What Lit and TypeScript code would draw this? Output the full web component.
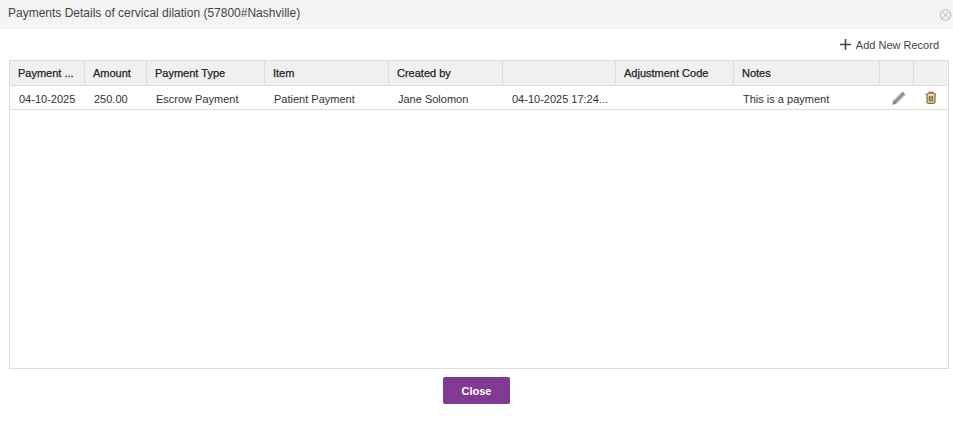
import { LitElement, html, css } from "lit";
import { customElement } from "lit/decorators.js";

const heads = ["Payment ...", "Amount", "Payment Type", "Item", "Created by", "", "Adjustment Code", "Notes", "", ""];
const cells = ["04-10-2025", "250.00", "Escrow Payment", "Patient Payment", "Jane Solomon", "04-10-2025 17:24...", "", "This is a payment"];

@customElement("app-root")
export class AppRoot extends LitElement {
  static styles = css`
    :host { display: block; width: 953px; height: 428px; background: #fff; overflow: hidden;
      font-family: "Liberation Sans", Arial, sans-serif; color: #333; }
    .title { height: 29px; background: #f4f4f4; display: flex; align-items: center; justify-content: space-between;
      padding: 0 1px 0 8px; box-sizing: border-box; font-size: 12px; color: #444; }
    .title span { position: relative; top: -2px; }
    .x { width: 13px; height: 13px; display: block; margin-top: 0; }
    .tools { height: 31px; display: flex; justify-content: flex-end; align-items: center; padding: 0 14px 0 0; font-size: 11px; color: #444; gap: 4px; box-sizing: border-box; }
    .tools svg { display: block; }
    .table { margin: 0 4px 0 9px; height: 309px; box-sizing: border-box; border: 1px solid #dcdcdc; }
    .row { display: grid; grid-template-columns: 75px 62px 118px 124px 114px 113px 118px 146px 34px 1fr; }
    .head { background: #f0f0f0; height: 25px; border-bottom: 1px solid #dcdcdc; box-sizing: border-box; }
    .body { height: 24px; border-bottom: 1px solid #dcdcdc; box-sizing: border-box; }
    .head div { border-right: 1px solid #dcdcdc; font-size: 11px; font-weight: 400; -webkit-text-stroke: 0.25px #222; color: #222; padding-left: 8px; line-height: 24px; white-space: nowrap; overflow: hidden; }
    .head div:last-child { border-right: 0; }
    .body div { font-size: 11px; color: #333; padding-left: 9px; line-height: 27px; white-space: nowrap; overflow: hidden; }
    .body .ic { padding: 0; display: flex; justify-content: center; align-items: flex-start; }
    .pencil { margin: 4px 0 0 3px; }
    .trash { margin: 5px 0 0 0; }
    .foot { display: flex; justify-content: center; padding-top: 8px; }
    button { width: 67px; height: 27px; background: #803a92; border: 0; border-radius: 2px; color: #fff; font: bold 11px "Liberation Sans", Arial, sans-serif; padding: 0; }
  `;

  render() {
    return html`
      <div class="title">
        <span>Payments Details of cervical dilation (57800#Nashville)</span>
        <svg class="x" viewBox="0 0 13 13" fill="none" stroke="#b5b5b5" stroke-width="1"><circle cx="6.5" cy="7" r="5.3"/><path d="M3 3.5l7 7M10 3.5l-7 7"/></svg>
      </div>
      <div class="tools">
        <svg width="13" height="13" viewBox="0 0 13 13"><path d="M6.5 1v11M1 6.5h11" stroke="#444" stroke-width="1.6" fill="none"/></svg>
        <span>Add New Record</span>
      </div>
      <div class="table">
        <div class="row head">${heads.map((h) => html`<div>${h}</div>`)}</div>
        <div class="row body">
          ${cells.map((c) => html`<div>${c}</div>`)}
          <div class="ic">
            <svg class="pencil" width="16" height="16" viewBox="0 0 16 16">
              <path d="M11.5 1.5l3 3L5 14l-3.8.8L2 11z" fill="#8c8c8c"/>
              <path d="M3 11.2l8.5-8.5M5 13l8.5-8.5" stroke="#c4c4c4" stroke-width=".8" fill="none"/>
            </svg>
          </div>
          <div class="ic">
            <svg class="trash" width="12" height="13" viewBox="0 0 12 13" fill="none" stroke="#6b4a12" stroke-width="1">
              <path d="M.8 3h10.4M4 3V1.2h4V3"/>
              <path d="M2 3v8.2c0 .7.4 1.1 1 1.1h6c.6 0 1-.4 1-1.1V3" fill="#f3e3b8"/>
              <path d="M4.3 4.8v5.8M6 4.8v5.8M7.7 4.8v5.8"/>
            </svg>
          </div>
        </div>
      </div>
      <div class="foot"><button>Close</button></div>
    `;
  }
}
